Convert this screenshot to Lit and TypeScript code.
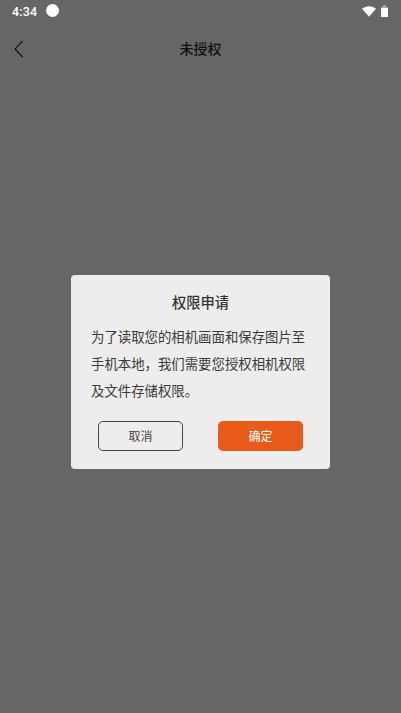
import { LitElement, html, css } from "lit";
import { customElement } from "lit/decorators.js";

@customElement("app-root")
export class AppRoot extends LitElement {
  static styles = css`
    :host {
      display: flex;
      flex-direction: column;
      width: 100%;
      height: 100vh;
      background: #666666;
      font-family: "Noto Sans CJK SC", "Roboto", sans-serif;
      overflow: hidden;
    }
    .status {
      display: flex;
      align-items: center;
      height: 22px;
      padding: 0 13px 0 12px;
      color: #fff;
    }
    .time {
      font-family: "Roboto", sans-serif;
      font-size: 12.5px;
      font-weight: 500;
      letter-spacing: 0.2px;
      margin-top: 1px;
    }
    .dot {
      width: 13px;
      height: 13px;
      border-radius: 50%;
      background: #fff;
      margin-left: 9px;
      margin-top: -2px;
    }
    .spacer { flex: 1; }
    .status svg { display: block; }
    .wifi { margin-right: 5px; }
    .nav {
      display: grid;
      grid-template-columns: 1fr auto 1fr;
      align-items: center;
      height: 52px;
    }
    .back { padding: 2px 0 0 14px; display: flex; }
    .nav-title {
      font-size: 14px;
      font-weight: 500;
      color: #111;
    }
    .main {
      flex: 1;
      display: flex;
      align-items: center;
      justify-content: center;
      padding-bottom: 43px;
    }
    .dialog {
      box-sizing: border-box;
      width: 259px;
      height: 194px;
      background: #eeedeb;
      border-radius: 4px;
      padding: 17px 20px 0;
      display: flex;
      flex-direction: column;
    }
    .title {
      text-align: center;
      font-size: 14.3px;
      font-weight: 500;
      line-height: 20px;
      color: #333;
    }
    .body {
      margin-top: 11px;
      font-size: 13.4px;
      line-height: 27px;
      color: #3a3a3a;
      width: 216px;
    }
    .actions {
      display: flex;
      justify-content: space-between;
      margin-top: 17px;
      padding: 0 7px;
    }
    .btn {
      box-sizing: border-box;
      width: 85px;
      height: 30px;
      border-radius: 5px;
      display: flex;
      align-items: center;
      justify-content: center;
      font-size: 12px;
      padding-bottom: 1px;
    }
    .cancel { border: 1px solid #444; color: #444; }
    .ok { background: #e95b1a; color: #fff; }
  `;

  render() {
    return html`
      <div class="status">
        <span class="time">4:34</span>
        <span class="dot"></span>
        <span class="spacer"></span>
        <svg class="wifi" width="14" height="11" viewBox="0 0 14 11"><path d="M0 2.8C3.9-.7 10.100-.7 14 2.800L7 10.800Z" fill="#fff"/></svg>
        <svg width="7" height="12" viewBox="0 0 7 12"><path d="M2 0h3v2h2v10H0V2h2Z" fill="#fff" fill-opacity="0.45"/><path d="M0 3h7v9H0Z" fill="#fff"/></svg>
      </div>
      <div class="nav">
        <div class="back">
          <svg width="10" height="18" viewBox="0 0 10 18"><path d="M8.600 1 1 9 8.600 17" fill="none" stroke="#111" stroke-width="1.1"/></svg>
        </div>
        <div class="nav-title">未授权</div>
        <div></div>
      </div>
      <div class="main">
        <div class="dialog">
          <div class="title">权限申请</div>
          <div class="body">为了读取您的相机画面和保存图片至手机本地，我们需要您授权相机权限及文件存储权限。</div>
          <div class="actions">
            <div class="btn cancel">取消</div>
            <div class="btn ok">确定</div>
          </div>
        </div>
      </div>
    `;
  }
}
